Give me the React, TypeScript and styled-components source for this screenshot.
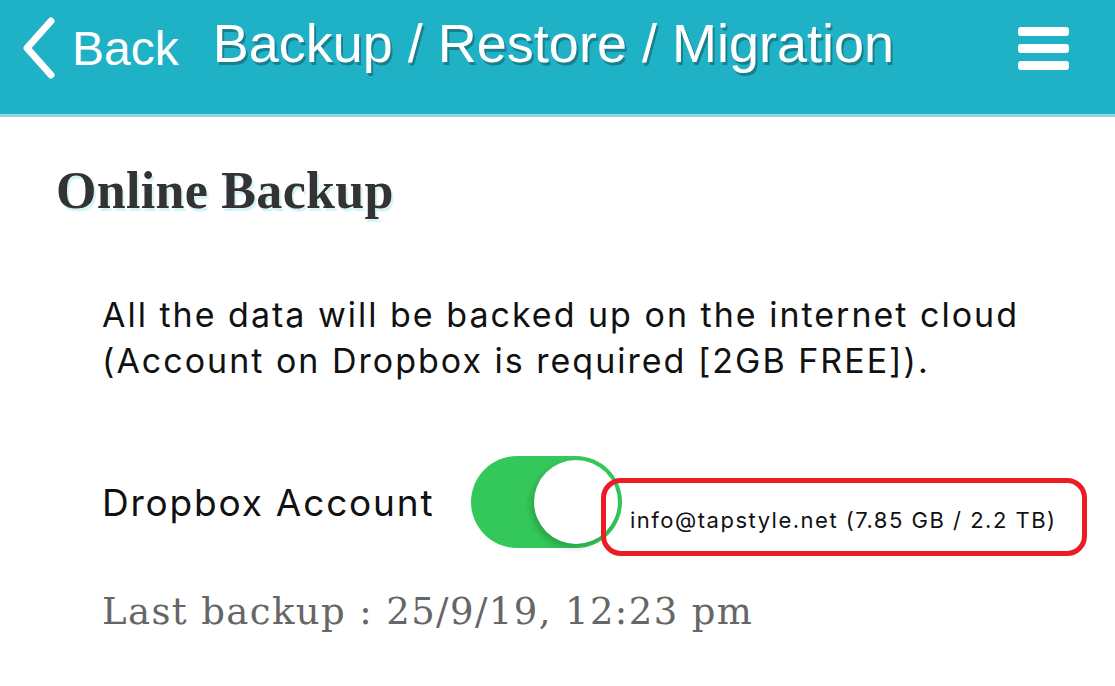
import React from 'react';
import styled, { createGlobalStyle } from 'styled-components';

const GlobalStyle = createGlobalStyle`
  html, body {
    margin: 0;
    padding: 0;
    background: #ffffff;
  }
  body {
    font-family: 'Inter', 'Liberation Sans', sans-serif;
  }
`;

export default function App() {
  return (
    <Page>
      <GlobalStyle />
      <Header>
        <BackButton>
          <svg width="38" height="64" viewBox="0 0 38 64">
            <path
              d="M31 5 L7 32 L31 59"
              fill="none"
              stroke="#ffffff"
              strokeWidth="7"
              strokeLinecap="round"
              strokeLinejoin="round"
            />
          </svg>
          <BackLabel>Back</BackLabel>
        </BackButton>
        <Title>Backup / Restore / Migration</Title>
        <Menu>
          <MenuBar />
          <MenuBar />
          <MenuBar />
        </Menu>
      </Header>
      <Content>
        <SectionTitle>Online Backup</SectionTitle>
        <Description>
          All the data will be backed up on the internet cloud
          <br />
          (Account on Dropbox is required [2GB FREE]).
        </Description>
        <AccountRow>
          <AccountLabel>Dropbox Account</AccountLabel>
          <Toggle>
            <Knob />
          </Toggle>
          <AccountInfo>info@tapstyle.net (7.85 GB / 2.2 TB)</AccountInfo>
        </AccountRow>
        <LastBackup>Last backup : 25/9/19, 12:23 pm</LastBackup>
      </Content>
    </Page>
  );
}

const Page = styled.div`
  width: 1115px;
  min-height: 686px;
  background: #ffffff;
`;

const Header = styled.header`
  background: #1fb2c6;
  border-bottom: 3px solid #93d6e0;
  display: flex;
  align-items: flex-start;
  padding: 16px 46px 0 20px;
  box-sizing: border-box;
  height: 117px;
`;

const BackButton = styled.div`
  display: flex;
  align-items: center;
  gap: 14px;
  color: #ffffff;
`;

const BackLabel = styled.span`
  font-family: 'Liberation Sans', Arial, sans-serif;
  font-size: 48px;
  color: #ffffff;
`;

const Title = styled.h1`
  margin: -4px 0 0 34px;
  font-family: 'Liberation Sans', Arial, sans-serif;
  font-weight: 400;
  font-size: 54px;
  color: #ffffff;
  text-shadow: 2px 3px 0 #1a7f8d;
  flex: 1;
  white-space: nowrap;
`;

const Menu = styled.div`
  display: flex;
  flex-direction: column;
  gap: 8px;
  margin-top: 11px;
`;

const MenuBar = styled.span`
  display: block;
  width: 51px;
  height: 9px;
  border-radius: 3px;
  background: #ffffff;
`;

const Content = styled.main`
  padding: 44px 0 0 56px;
`;

const SectionTitle = styled.h2`
  margin: 0;
  font-family: 'Liberation Serif', Georgia, serif;
  font-weight: 700;
  font-size: 52px;
  color: #333333;
  letter-spacing: 0.3px;
  text-shadow: 2px 3px 0 #d4f4f8;
`;

const Description = styled.p`
  margin: 72px 0 0 46px;
  font-family: 'Inter', 'Liberation Sans', sans-serif;
  font-size: 34px;
  line-height: 46px;
  letter-spacing: 2px;
  color: #111111;
`;

const AccountRow = styled.div`
  position: relative;
  display: flex;
  align-items: center;
  margin: 72px 0 0 46px;
  height: 92px;
`;

const AccountLabel = styled.span`
  font-family: 'Inter', 'Liberation Sans', sans-serif;
  font-size: 37px;
  letter-spacing: 1.8px;
  color: #111111;
  width: 369px;
`;

const Toggle = styled.div`
  width: 151px;
  height: 92px;
  border-radius: 46px;
  background: #34c759;
  display: flex;
  align-items: center;
  justify-content: flex-end;
  padding-right: 4px;
  box-sizing: border-box;
`;

const Knob = styled.span`
  width: 84px;
  height: 84px;
  border-radius: 50%;
  background: #ffffff;
  box-shadow: -3px 4px 6px rgba(0, 0, 0, 0.18);
`;

const AccountInfo = styled.span`
  position: absolute;
  left: 499px;
  top: 22px;
  width: 486px;
  height: 78px;
  border: 5px solid #ec1c24;
  border-radius: 20px;
  display: flex;
  align-items: center;
  padding-left: 24px;
  box-sizing: border-box;
  padding-top: 6px;
  font-family: 'Inter', 'Liberation Sans', sans-serif;
  font-size: 22px;
  letter-spacing: 1.5px;
  color: #111111;
  background: transparent;
`;

const LastBackup = styled.div`
  margin: 42px 0 0 46px;
  font-family: 'DejaVu Serif', 'Liberation Serif', serif;
  font-size: 37px;
  letter-spacing: 1.4px;
  color: #666666;
`;
